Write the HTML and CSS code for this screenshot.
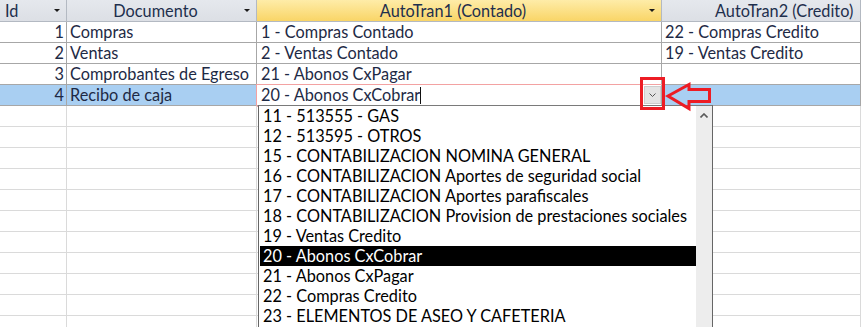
FILE: index.html
```html
<!DOCTYPE html>
<html lang="es">
<head>
    <meta charset="UTF-8">
    <title>Documentos - AutoTran</title>
    <link rel="stylesheet" href="styles.css">
</head>
<body>
    <div class="sheet">
        <!-- Datasheet -->
        <div class="grid">
            <div class="cell hd hd-id"><span class="label">Id</span><span class="sort"></span></div>
            <div class="cell hd"><span class="label">Documento</span><span class="sort"></span></div>
            <div class="cell hd hd-sel"><span class="label">AutoTran1 (Contado)</span><span class="sort"></span></div>
            <div class="cell hd hd-last"><span class="label">AutoTran2 (Credito)</span></div>

            <div class="cell num">1</div>
            <div class="cell">Compras</div>
            <div class="cell wide">1 - Compras Contado</div>
            <div class="cell">22 - Compras Credito</div>

            <div class="cell num">2</div>
            <div class="cell">Ventas</div>
            <div class="cell wide">2 - Ventas Contado</div>
            <div class="cell">19 - Ventas Credito</div>

            <div class="cell num">3</div>
            <div class="cell">Comprobantes de Egreso</div>
            <div class="cell wide">21 - Abonos CxPagar</div>
            <div class="cell"></div>

            <div class="cell num cur">4</div>
            <div class="cell cur">Recibo de caja</div>
            <div class="cell wide edit">
                <span>20 - Abonos CxCobrar</span><span class="caret"></span>
                <span class="drop-btn">
                    <svg width="7" height="4" viewBox="0 0 7 4"><path d="M0.5 0.5 L3.5 3.5 L6.5 0.5" fill="none" stroke="#555" stroke-width="1"/></svg>
                </span>
            </div>
            <div class="cell cur"></div>
        </div>

        <div class="grid grid-empty" id="emptyRows"></div>

        <!-- Combo list -->
        <div class="combo">
            <ul class="items">
                <li>11 - 513555 - GAS</li>
                <li>12 - 513595 - OTROS</li>
                <li>15 - CONTABILIZACION NOMINA GENERAL</li>
                <li>16 - CONTABILIZACION Aportes de seguridad social</li>
                <li>17 - CONTABILIZACION Aportes parafiscales</li>
                <li>18 - CONTABILIZACION Provision de prestaciones sociales</li>
                <li>19 - Ventas Credito</li>
                <li class="picked">20 - Abonos CxCobrar</li>
                <li>21 - Abonos CxPagar</li>
                <li>22 - Compras Credito</li>
                <li>23 - ELEMENTOS DE ASEO Y CAFETERIA</li>
            </ul>
            <div class="scroll">
                <svg width="8" height="5" viewBox="0 0 8 5"><path d="M0.5 4.5 L4 1 L7.5 4.5" fill="none" stroke="#5a5a5a" stroke-width="1.6"/></svg>
            </div>
        </div>

        <!-- Callout -->
        <svg class="callout" width="861" height="327" viewBox="0 0 861 327">
            <rect x="641.5" y="78.5" width="22" height="30" fill="none" stroke="#ed1c24" stroke-width="3"/>
            <polygon points="668,96 689,84.5 689,89.5 709.5,89.5 709.5,101.5 689,101.5 689,108.5" fill="none" stroke="#ed1c24" stroke-width="3" stroke-linejoin="miter"/>
        </svg>
    </div>

    <script>
        // Fill the rest of the datasheet with blank rows
        const emptyRows = document.getElementById('emptyRows');
        for (let i = 0; i < 11; i++) {
            for (let c = 0; c < 4; c++) {
                const cell = document.createElement('div');
                cell.className = 'cell blank';
                emptyRows.appendChild(cell);
            }
        }
    </script>
</body>
</html>
```

FILE: styles.css
```css
/* Reset */
* {
    margin: 0;
    padding: 0;
    box-sizing: border-box;
}

body {
    font-family: Lato, "Liberation Sans", sans-serif;
    font-size: 16.3px;
    color: #1e2a45;
    background-color: #fff;
    overflow: hidden;
}

.sheet {
    position: relative;
    width: 861px;
    height: 327px;
    overflow: hidden;
}

/* Datasheet grid */
.grid {
    display: grid;
    grid-template-columns: 67px 190px 405px 1fr;
    grid-template-rows: 22px;
    grid-auto-rows: 21px;
}

.grid-empty {
    grid-template-rows: none;
}

.cell {
    border-right: 1px solid #a7a7a7;
    border-bottom: 1px solid #a7a7a7;
    padding: 0 3px;
    line-height: 20px;
    white-space: nowrap;
    overflow: hidden;
}

.cell.num {
    text-align: right;
    padding-right: 2px;
}

.cell.wide {
    padding-left: 4px;
}

.cell.blank {
    border-color: #dadada;
}

/* Header */
.hd {
    display: flex;
    align-items: center;
    background: linear-gradient(#e5e8ed, #dcdfe5);
    border-color: #b3b9c2;
    color: #1e2f4d;
    padding: 0;
}

.hd .label {
    flex: 1;
    text-align: center;
}

.hd .sort {
    width: 0;
    height: 0;
    border-left: 3px solid transparent;
    border-right: 3px solid transparent;
    border-top: 3px solid #1a1a1a;
    margin-right: 6px;
}

.hd-id .label {
    text-align: left;
    padding-left: 5px;
}

.hd-sel {
    background: linear-gradient(#feeca8, #f9d567);
}

.hd-last .label {
    text-align: left;
    padding-left: 53px;
}

/* Current record */
.cur {
    background-color: #a9cff2;
}

.edit {
    display: flex;
    align-items: center;
    background-color: #fff;
    outline: 1px solid #f3a2a2;
    padding-right: 0;
}

.caret {
    width: 1px;
    height: 17px;
    background-color: #111;
}

.drop-btn {
    margin-left: auto;
    width: 17px;
    height: 18px;
    background-color: #e4e4e4;
    border: 1px solid #cdcdcd;
    display: flex;
    align-items: center;
    justify-content: center;
}

/* Combo list */
.combo {
    position: absolute;
    left: 258px;
    top: 105px;
    width: 455px;
    height: 240px;
    display: flex;
    background-color: #fff;
    border-left: 1px solid #666;
    border-right: 1px solid #666;
    border-top: 1px solid #7a7a7a;
}

.items {
    list-style: none;
    flex: 1;
    padding-left: 1px;
    color: #000;
}

.items li {
    height: 20px;
    line-height: 20px;
    padding-left: 3px;
    white-space: nowrap;
}

.items li.picked {
    background-color: #000;
    color: #fff;
}

.scroll {
    width: 16px;
    background-color: #ededed;
    display: flex;
    justify-content: center;
    padding-top: 7px;
}

.scroll svg {
    display: block;
}

/* Red callout */
.callout {
    position: absolute;
    left: 0;
    top: 0;
    pointer-events: none;
}
```
